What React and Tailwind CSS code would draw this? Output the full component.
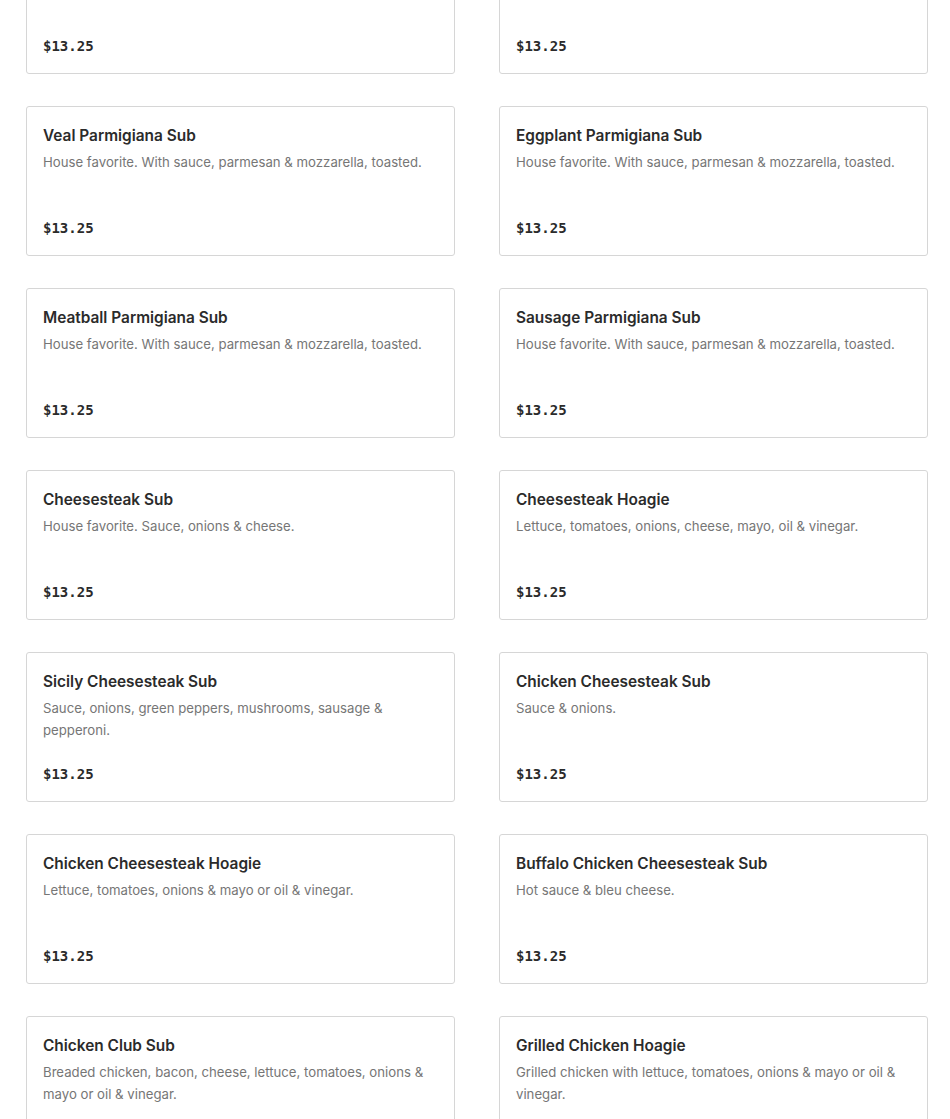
const items = [
  { name: 'Chicken Parmigiana Sub', desc: 'House favorite. With sauce, parmesan & mozzarella, toasted.' },
  { name: 'Shrimp Parmigiana Sub', desc: 'House favorite. With sauce, parmesan & mozzarella, toasted.' },
  { name: 'Veal Parmigiana Sub', desc: 'House favorite. With sauce, parmesan & mozzarella, toasted.' },
  { name: 'Eggplant Parmigiana Sub', desc: 'House favorite. With sauce, parmesan & mozzarella, toasted.' },
  { name: 'Meatball Parmigiana Sub', desc: 'House favorite. With sauce, parmesan & mozzarella, toasted.' },
  { name: 'Sausage Parmigiana Sub', desc: 'House favorite. With sauce, parmesan & mozzarella, toasted.' },
  { name: 'Cheesesteak Sub', desc: 'House favorite. Sauce, onions & cheese.' },
  { name: 'Cheesesteak Hoagie', desc: 'Lettuce, tomatoes, onions, cheese, mayo, oil & vinegar.' },
  { name: 'Sicily Cheesesteak Sub', desc: 'Sauce, onions, green peppers, mushrooms, sausage & pepperoni.' },
  { name: 'Chicken Cheesesteak Sub', desc: 'Sauce & onions.' },
  { name: 'Chicken Cheesesteak Hoagie', desc: 'Lettuce, tomatoes, onions & mayo or oil & vinegar.' },
  { name: 'Buffalo Chicken Cheesesteak Sub', desc: 'Hot sauce & bleu cheese.' },
  { name: 'Chicken Club Sub', desc: 'Breaded chicken, bacon, cheese, lettuce, tomatoes, onions & mayo or oil & vinegar.' },
  { name: 'Grilled Chicken Hoagie', desc: 'Grilled chicken with lettuce, tomatoes, onions & mayo or oil & vinegar.' },
];

const MenuCard = ({ name, desc }) => {
  return (
    <div className="h-[150px] rounded-[3px] border border-[#d6d6d6] bg-white pl-4 pr-3 pt-[19px] pb-[17px] flex flex-col">
      <h3 className="text-[15.4px] leading-5 font-semibold text-[#2b2b2b] font-['Inter',sans-serif]">{name}</h3>
      <p className="mt-[5px] h-11 text-[13.2px] leading-[22px] text-[#767676] font-['Inter',sans-serif]">{desc}</p>
      <div className="mt-auto text-[14px] leading-5 font-bold text-[#2b2b2b] font-['DejaVu_Sans_Mono',monospace]">$13.25</div>
    </div>
  );
};

export default function App() {
  return (
    <div className="bg-white min-h-screen overflow-hidden">
      <div className="-mt-[76px] pl-[26px] pr-[22px] grid grid-cols-2 gap-x-[44px] gap-y-8">
        {items.map((item) => (
          <MenuCard key={item.name} {...item} />
        ))}
      </div>
    </div>
  );
}
